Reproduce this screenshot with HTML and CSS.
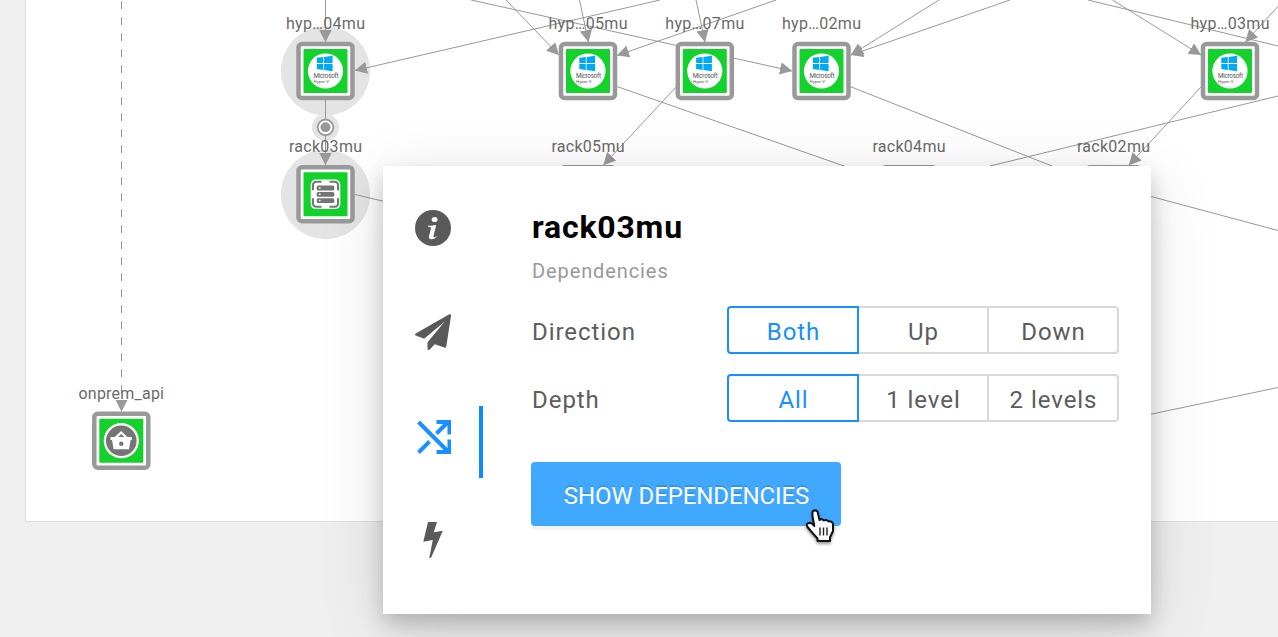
FILE: index.html
```
<!DOCTYPE html>
<html lang="en">
<head>
<meta charset="utf-8">
<title>rack03mu dependencies</title>
<link rel="stylesheet" href="styles.css">
</head>
<body>
<main class="stage">
  <div class="sheet"></div>
  <svg class="graph" width="1278" height="637" viewBox="0 0 1278 637">
    <defs>
      <marker id="arrow" markerUnits="userSpaceOnUse" markerWidth="14" markerHeight="14" refX="12" refY="6.2" orient="auto">
        <path class="arrowhead" d="M0 0 12.2 6.2 0 12.4z"/>
      </marker>
      <g id="frame">
        <rect class="frame" x="-27" y="-27" width="54" height="54" rx="3.5"/>
        <rect class="status" x="-22" y="-22" width="44" height="44" rx="1"/>
      </g>
      <g id="hyperv">
        <use href="#frame"/>
        <circle class="disc" r="17.6"/>
        <path class="windows" d="M-8.7-13.2-2.2-14v6.1h-6.5zM-1.4-14.1 7.1-15.2v7.3h-8.5zM-8.7-7.1h6.5V-1l-6.5-.9zM-1.4-7.1h8.5V.2L-1.4-.9z"/>
        <text class="brand" x="-12" y="7.3" textLength="25">Microsoft</text>
        <text class="product" x="-12" y="12" textLength="15.5">Hyper-V</text>
      </g>
    </defs>

    <g class="halos">
      <circle cx="325.5" cy="71" r="44.7"/>
      <circle cx="325.5" cy="194.5" r="44.7"/>
      <circle cx="325.5" cy="127.3" r="13.5"/>
    </g>

    <g class="edges">
      <path marker-end="url(#arrow)" d="M325.5 0V42"/>
      <path marker-end="url(#arrow)" d="M325.5 100V165"/>
      <path marker-end="url(#arrow)" d="M660 0 355 70.5"/>
      <path marker-end="url(#arrow)" d="M471 0 792 71"/>
      <path marker-end="url(#arrow)" d="M506 0 559 55"/>
      <path marker-end="url(#arrow)" d="M579.5 0 588.5 42"/>
      <path marker-end="url(#arrow)" d="M696 0 705 42"/>
      <path marker-end="url(#arrow)" d="M776 0 617 55.5"/>
      <path marker-end="url(#arrow)" d="M939 0 851 55"/>
      <path marker-end="url(#arrow)" d="M1010 0 851 55"/>
      <path marker-end="url(#arrow)" d="M1112.5 0 1201 55"/>
      <path marker-end="url(#arrow)" d="M1282 2 1245.5 42"/>
      <path marker-end="url(#arrow)" d="M676 87 603.5 165"/>
      <path marker-end="url(#arrow)" d="M1201 87 1129 165"/>
      <path d="M1088 0 1278 46M617 86.5 844 166 1000 221M850 86.5 1052 166M1278 96 990 166M355 194.5 412 208M1140 193.5 1278 230.5M1140 416.5 1278 387.5"/>
      <path class="dashed" d="M121.5 1V395"/>
      <path marker-end="url(#arrow)" d="M121.5 400V411.5"/>
    </g>

    <g class="junction">
      <circle cx="325.5" cy="127.3" r="7.8"/>
      <circle class="core" cx="325.5" cy="127.3" r="5"/>
    </g>

    <use href="#hyperv" x="325.5" y="71"/>
    <use href="#hyperv" x="588" y="71"/>
    <use href="#hyperv" x="704.8" y="71"/>
    <use href="#hyperv" x="821.5" y="71"/>
    <use href="#hyperv" x="1230" y="71"/>
    <use href="#frame" x="588" y="194.3"/>
    <use href="#frame" x="909" y="194.3"/>
    <use href="#frame" x="1113.5" y="194.3"/>

    <g transform="translate(325.5 194.3)">
      <use href="#frame"/>
      <rect class="disc" x="-14.8" y="-14.8" width="29.6" height="29.6" rx="5"/>
      <path class="bracket" d="M-12.5-4v-5q0-3.5 3.5-3.5h5M4-12.5h5q3.5 0 3.5 3.5v5M12.5 4v5q0 3.5-3.5 3.5H4M-4 12.5h-5q-3.5 0-3.5-3.5V4"/>
      <g class="glyph">
        <rect x="-8.8" y="-8.7" width="17.6" height="4.9" rx="1.5"/>
        <rect x="-8.8" y="-2.4" width="17.6" height="4.9" rx="1.5"/>
        <rect x="-8.8" y="3.9" width="17.6" height="4.9" rx="1.5"/>
      </g>
      <path class="lights" d="M-6.5-6.2h1.5M-6.5 0h1.5M-6.5 6.3h1.5"/>
    </g>

    <g transform="translate(121.3 440.7)">
      <use href="#frame"/>
      <circle class="disc" r="17.6"/>
      <circle class="glyph" r="15.3"/>
      <path class="disc" fill-rule="evenodd" d="M-10.8-3.8h4.3L-.2-9.7 6.1-3.8h4.5V-.8H9.3L7.7 8.6H-7.7L-9.3-.8h-1.5zM-3.2-3.8h6L-.2-6.6z"/>
      <circle class="glyph" cy="3" r="2.2"/>
    </g>

    <g class="labels">
      <text x="286" y="29" textLength="79">hyp…04mu</text>
      <text x="548.5" y="29" textLength="79">hyp…05mu</text>
      <text x="665.3" y="29" textLength="79">hyp…07mu</text>
      <text x="782" y="29" textLength="79">hyp…02mu</text>
      <text x="1190.5" y="29" textLength="79">hyp…03mu</text>
      <text x="289" y="152" textLength="73">rack03mu</text>
      <text x="551.5" y="152" textLength="73">rack05mu</text>
      <text x="872.5" y="152" textLength="73">rack04mu</text>
      <text x="1077" y="152" textLength="73">rack02mu</text>
      <text x="78.5" y="398.5" textLength="85.5">onprem_api</text>
    </g>
  </svg>

  <section class="panel">
    <nav class="tabs">
      <a class="tab">
        <svg width="36" height="36" viewBox="0 0 36 36"><circle cx="18" cy="18" r="18"/><g class="cutout"><ellipse cx="19.6" cy="9.5" rx="2.9" ry="2.6"/><path d="M13.2 15.7q3.7.3 7.3-.7.7 0 .5.8L18.6 25.5q-.4 1.7.6 1.7.9 0 2-1 .6.3.2.9-1.9 2.2-4.9 2.2-3.1 0-2.5-3l1.9-7.7q.3-1.5-1.2-1.6l-1.7-.3z"/></g></svg>
      </a>
      <a class="tab">
        <svg width="36" height="36" viewBox="0 0 36 36"><path d="M34.3.3Q36.2-.4 36 1.8L31.3 32.5q-.3 1.7-2 1.1L19.7 30.3 15 35.2q-2.5 1.8-2.5-.7V28.3L29.7 7.5 9.2 24.7.7 21.5q-1.3-.9 0-1.9z"/></svg>
      </a>
      <a class="tab tab-active">
        <svg width="36" height="36" viewBox="0 0 36 36"><path class="stroke" d="M3.5 4 34 34.5M3.5 34.5 14.5 23.5M21.5 15.5 33 4M21.5 4H34.5V16.5M21.5 34H34.5V21.5"/></svg>
      </a>
      <a class="tab">
        <svg width="36" height="36" viewBox="0 0 36 36"><path d="M13 0h9L18.8 10.3 27.8 8.8 16.3 35.2q-1 1.2-2 .5L17.8 17.9 8.3 19.8z"/></svg>
      </a>
    </nav>
    <div class="content">
      <h1 class="title">rack03mu</h1>
      <h2 class="subtitle">Dependencies</h2>
      <div class="row">
        <span class="name">Direction</span>
        <div class="segments"><span class="segment selected">Both</span><span class="segment">Up</span><span class="segment">Down</span></div>
      </div>
      <div class="row">
        <span class="name">Depth</span>
        <div class="segments"><span class="segment selected">All</span><span class="segment">1 level</span><span class="segment">2 levels</span></div>
      </div>
      <button class="action">SHOW DEPENDENCIES</button>
    </div>
  </section>

  <svg class="pointer" width="34" height="40" viewBox="0 0 34 40">
    <path class="hand" d="M8.5 3.5q2.5-2.2 5 0l2 8.5q2-2 4.5.5 2.5-1.5 4.5 1 3-1 4.5 2.2V23l-3 6.500v3.500H13.500v-2.500L8.500 25 3.500 19q-2-3.500 2-4.300 2.500 0 4.800 3.300L8.500 8z"/>
    <path class="fingers" d="M16 19.5v8M19.5 19.5v8M23 19.5v8"/>
  </svg>
</main>
</body>
</html>
```
FILE: styles.css
```
* { box-sizing: border-box; }

body {
  margin: 0;
  background: #efefef;
  font-family: Roboto, "Liberation Sans", sans-serif;
}

.stage {
  position: relative;
  width: 1278px;
  height: 637px;
  overflow: hidden;
}

.sheet {
  height: 522px;
  margin-left: 25px;
  background: #fff;
  border-left: 1px solid #dcdcdc;
  border-bottom: 1px solid #dfdfdf;
}

/* Topology graph */
.graph { position: absolute; inset: 0; }
.halos { fill: #e4e4e4; }
.edges { fill: none; stroke: #999; stroke-width: 1; }
.dashed { stroke-dasharray: 8 8; }
.arrowhead { fill: #999; stroke: none; }
.frame { fill: #fff; stroke: #999; stroke-width: 4.5; }
.status { fill: #12d22b; }
.disc { fill: #fff; }
.windows { fill: #00a9f4; }
.brand { font-size: 6.3px; fill: #555; }
.product { font-size: 4.3px; fill: #555; }
.junction { fill: #fff; stroke: #999; stroke-width: 1.8; }
.core { fill: #999; stroke: none; }
.bracket { fill: none; stroke: #757575; stroke-width: 2; }
.glyph { fill: #757575; }
.lights { stroke: #fff; stroke-width: 1.5; }
.labels { font-size: 16px; fill: #6a6a6a; }

/* Details panel */
.panel {
  position: absolute;
  left: 383px;
  top: 166px;
  width: 768px;
  height: 448px;
  display: flex;
  background: #fff;
  box-shadow: 0 10px 20px rgba(0, 0, 0, .2), 0 14px 64px rgba(0, 0, 0, .12);
}

.tabs {
  width: 100px;
  padding-top: 10px;
  display: flex;
  flex-direction: column;
}

.tab {
  position: relative;
  height: 104px;
  display: flex;
  align-items: center;
  padding-left: 32px;
  fill: #5a5a5a;
}

.tab-active::after {
  content: "";
  position: absolute;
  right: 0;
  top: 22px;
  width: 4px;
  height: 72px;
  background: #0d8bff;
}

.cutout { fill: #fff; }
.stroke { fill: none; stroke: #1890ff; stroke-width: 4; }

.content { padding: 40px 0 0 48px; }

.title {
  margin: 0;
  padding-left: 1px;
  font-size: 32px;
  line-height: 42px;
  font-weight: 700;
  letter-spacing: .8px;
  color: #000;
}

.subtitle {
  margin: 8px 0 20px;
  padding-left: 1px;
  font-size: 20px;
  line-height: 30px;
  font-weight: 400;
  letter-spacing: .9px;
  color: #999;
}

.row {
  display: flex;
  align-items: center;
  height: 48px;
  margin-bottom: 20px;
  font-size: 24px;
  letter-spacing: .95px;
  color: #5c5c5c;
}

.name {
  width: 196px;
  padding: 4px 0 0 1px;
}

.segments {
  display: grid;
  grid-template-columns: 132px 130px 130px;
  height: 48px;
}

.segment {
  display: flex;
  align-items: center;
  justify-content: center;
  border: 2px solid #d9d9d9;
  border-left: 0;
  padding: 4px 0 0 1px;
}

.segment:last-child { border-radius: 0 4px 4px 0; }

.selected {
  border: 2px solid #1890ff;
  border-radius: 4px 0 0 4px;
  color: #1890ff;
}

.action {
  display: block;
  width: 310px;
  height: 64px;
  margin: 40px 0 0;
  padding: 3px 0 0 1px;
  border: 0;
  border-radius: 4px;
  background: #40a9ff;
  box-shadow: 0 4px 0 rgba(0, 0, 0, .045);
  color: #fff;
  font: 400 24px Roboto, "Liberation Sans", sans-serif;
  letter-spacing: -.1px;
  text-shadow: 0 -2px 0 rgba(0, 0, 0, .12);
}

.pointer {
  position: absolute;
  left: 804px;
  top: 508px;
  filter: drop-shadow(0 2px 1.5px rgba(0, 0, 0, .4));
}
.hand { fill: #fff; stroke: #111; stroke-width: 2; stroke-linejoin: round; }
.fingers { stroke: #222; stroke-width: 1.4; }
```
